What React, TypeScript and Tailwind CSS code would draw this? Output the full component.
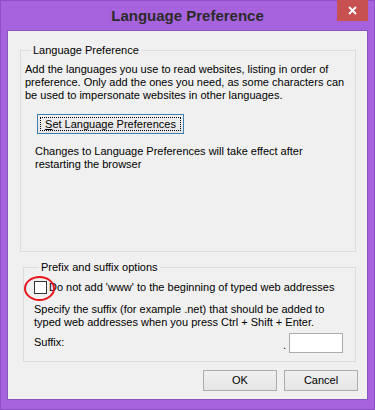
import { FC } from "react";

const font = { fontFamily: '"Liberation Sans", Arial, sans-serif' };

const WinButton: FC<{ label: React.ReactNode; className?: string; focused?: boolean }> = ({
  label,
  className = "",
  focused = false,
}) => (
  <button
    className={`flex items-center justify-center whitespace-nowrap border bg-gradient-to-b from-[#f0f0f0] to-[#e5e5e5] text-[11px] leading-[13px] text-black ${
      focused ? "border-[#3c7fb1] p-[2px]" : "border-[#acacac]"
    } ${className}`}
  >
    {focused ? (
      <span className="flex h-full w-full items-center justify-center border border-dotted border-black">
        {label}
      </span>
    ) : (
      label
    )}
  </button>
);

export default function App() {
  return (
    <div
      className="flex h-[410px] w-[375px] flex-col border border-[#8e4fc6] bg-[#a763de] text-[11px] leading-[13px] text-black"
      style={font}
    >
      {/* title bar */}
      <div className="grid h-[29px] shrink-0 grid-cols-[1fr_auto_1fr]">
        <div />
        <div className="pt-[6px] text-[15px] font-bold leading-[18px] text-[#2b2b2b]">
          Language Preference
        </div>
        <div className="flex justify-end pr-[6px]">
          <div className="-mt-px flex h-[21px] w-[31px] items-center justify-center bg-[#c75050]">
            <svg width="9" height="9" viewBox="0 0 9 9">
              <path d="M1 1L8 8M8 1L1 8" stroke="white" strokeWidth="1.8" />
            </svg>
          </div>
        </div>
      </div>

      {/* client area */}
      <div className="mx-[6px] mb-[9px] flex flex-1 flex-col border border-[#8a55bd] bg-[#f0f0f0]">
        <fieldset className="ml-[12px] mr-[11px] mt-[12px] h-[209px] border border-[#dcdcdc] pl-[4px]">
          <legend className="ml-[6px] px-[2px] leading-[15px]">Language Preference</legend>
          <p className="mt-[5px] whitespace-nowrap">
            Add the languages you use to read websites, listing in order of
            <br />
            preference. Only add the ones you need, as some characters can
            <br />
            be used to impersonate websites in other languages.
          </p>
          <WinButton
            focused
            className="ml-[12px] mt-[12px] h-[20px] w-[147px]"
            label={
              <span>
                <span className="underline">S</span>et Language Preferences
              </span>
            }
          />
          <p className="ml-[10px] mt-[11px] whitespace-nowrap">
            Changes to Language Preferences will take effect after
            <br />
            restarting the browser
          </p>
        </fieldset>

        <fieldset className="relative ml-[15px] mr-[11px] mt-[8px] h-[102px] border border-[#dcdcdc] pl-[10px]">
          <legend className="ml-[5px] px-[2px] leading-[15px]">Prefix and suffix options</legend>
          <div className="mt-[6px] flex items-center gap-[2px] whitespace-nowrap">
            <span className="h-[13px] w-[13px] shrink-0 border border-[#333] bg-white" />
            <span>Do not add 'www' to the beginning of typed web addresses</span>
          </div>
          <span className="pointer-events-none absolute left-0 top-[1px] h-[25px] w-[31px] rounded-[50%] border-2 border-[#e8141b]" />
          <p className="mt-[9px] whitespace-nowrap">
            Specify the suffix (for example .net) that should be added to
            <br />
            typed web addresses when you press Ctrl + Shift + Enter.
          </p>
          <div className="mt-[4px] flex items-center">
            <span className="mb-[2px]">Suffix:</span>
            <span className="ml-auto mr-[3px] mt-[4px]">.</span>
            <span className="mr-[12px] h-[20px] w-[54px] border border-[#acacac] bg-white" />
          </div>
        </fieldset>

        <div className="mr-[9px] mt-[8px] flex justify-end gap-[7px]">
          <WinButton label="OK" className="h-[21px] w-[74px]" />
          <WinButton label="Cancel" className="h-[21px] w-[74px]" />
        </div>
      </div>
    </div>
  );
}
